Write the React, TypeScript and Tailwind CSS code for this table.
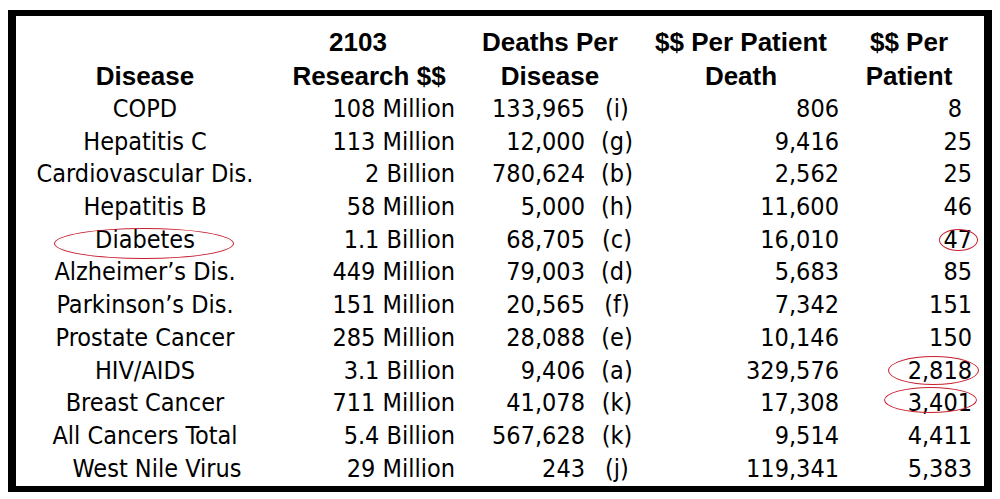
import React from 'react'

type Row = {
  disease: string
  research: string
  deaths: string
  source: string
  perDeath: string
  perPatient: string
  diseaseClass?: string
  patientClass?: string
  diseaseMark?: string
  patientMark?: string
}

const rows: Row[] = [
  { disease: 'COPD', research: '108 Million', deaths: '133,965', source: '(i)', perDeath: '806', perPatient: '8', patientClass: 'pr-[22px]' },
  { disease: 'Hepatitis C', research: '113 Million', deaths: '12,000', source: '(g)', perDeath: '9,416', perPatient: '25' },
  { disease: 'Cardiovascular Dis.', research: '2 Billion', deaths: '780,624', source: '(b)', perDeath: '2,562', perPatient: '25' },
  { disease: 'Hepatitis B', research: '58 Million', deaths: '5,000', source: '(h)', perDeath: '11,600', perPatient: '46' },
  {
    disease: 'Diabetes', research: '1.1 Billion', deaths: '68,705', source: '(c)', perDeath: '16,010', perPatient: '47',
    diseaseMark: 'left-[38px] top-[4px] w-[180px] h-[31px]',
    patientMark: 'left-[93px] top-[5px] w-[39px] h-[22px]',
  },
  { disease: 'Alzheimer’s Dis.', research: '449 Million', deaths: '79,003', source: '(d)', perDeath: '5,683', perPatient: '85' },
  { disease: 'Parkinson’s Dis.', research: '151 Million', deaths: '20,565', source: '(f)', perDeath: '7,342', perPatient: '151' },
  { disease: 'Prostate Cancer', research: '285 Million', deaths: '28,088', source: '(e)', perDeath: '10,146', perPatient: '150' },
  {
    disease: 'HIV/AIDS', research: '3.1 Billion', deaths: '9,406', source: '(a)', perDeath: '329,576', perPatient: '2,818',
    patientMark: 'left-[42px] top-[1px] w-[91px] h-[29px]',
  },
  {
    disease: 'Breast Cancer', research: '711 Million', deaths: '41,078', source: '(k)', perDeath: '17,308', perPatient: '3,401',
    patientMark: 'left-[38px] top-[0px] w-[93px] h-[26px]',
  },
  { disease: 'All Cancers Total', research: '5.4 Billion', deaths: '567,628', source: '(k)', perDeath: '9,514', perPatient: '4,411' },
  { disease: 'West Nile Virus', research: '29 Million', deaths: '243', source: '(j)', perDeath: '119,341', perPatient: '5,383', diseaseClass: 'pl-[24px]' },
]

const cols = 'grid grid-cols-[258px_190px_172px_210px_138px]'

function Ellipse({ className }: { className: string }) {
  return <span className={`pointer-events-none absolute rounded-[50%] border border-[#c8202f] ${className}`} />
}

export default function App() {
  return (
    <div className="h-[499px] w-[1000px] bg-white pl-[8px] pt-[10px]">
      <div className="h-[482px] w-[984px] border-x-8 border-y-[6px] border-black bg-white pt-[10px] text-black">
        {/* Header */}
        <div className={`${cols} font-['Liberation_Sans',Arial,sans-serif] text-[26px] font-bold leading-[33.5px]`}>
          <div className="flex flex-col text-center">
            <span>&nbsp;</span>
            <span>Disease</span>
          </div>
          <div className="flex flex-col text-center">
            <span className="pr-[22px]">2103</span>
            <span>Research $$</span>
          </div>
          <div className="flex flex-col text-center">
            <span>Deaths Per</span>
            <span>Disease</span>
          </div>
          <div className="flex flex-col text-center">
            <span>$$ Per Patient</span>
            <span>Death</span>
          </div>
          <div className="flex flex-col pr-[12px] text-center">
            <span>$$ Per</span>
            <span>Patient</span>
          </div>
        </div>

        {/* Body */}
        <div className="font-['DejaVu_Sans_Condensed','DejaVu_Sans',Verdana,sans-serif] text-[25px] font-stretch-semi-condensed leading-[32.7px]">
          {rows.map((r) => (
            <div key={r.disease} className={`${cols} h-[32.7px] whitespace-nowrap`}>
              <div className={`relative text-center ${r.diseaseClass ?? ''}`}>
                {r.disease}
                {r.diseaseMark && <Ellipse className={r.diseaseMark} />}
              </div>
              <div className="pr-[9px] text-right">{r.research}</div>
              <div className="flex">
                <span className="w-[121px] text-right">{r.deaths}</span>
                <span className="ml-[14px] w-[36px] text-center">{r.source}</span>
              </div>
              <div className="pr-[7px] text-right">{r.perDeath}</div>
              <div className={`relative text-right ${r.patientClass ?? 'pr-[12px]'}`}>
                {r.perPatient}
                {r.patientMark && <Ellipse className={r.patientMark} />}
              </div>
            </div>
          ))}
        </div>
      </div>
    </div>
  )
}
